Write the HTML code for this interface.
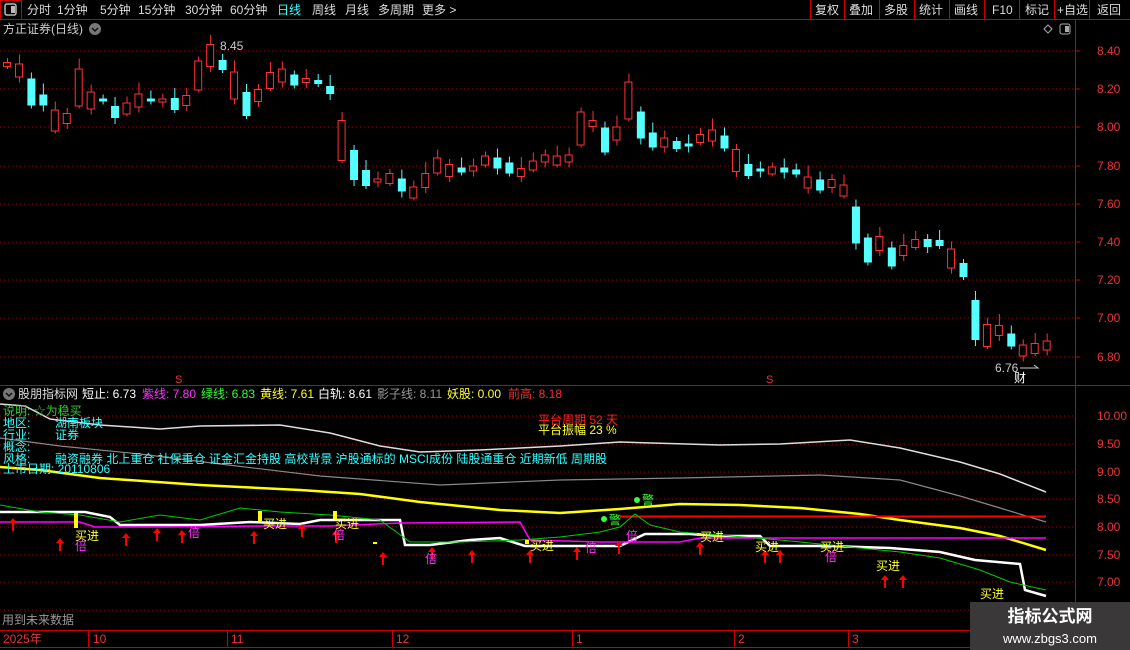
<!DOCTYPE html>
<html><head><meta charset="utf-8"><style>
body{margin:0;background:#000;width:1130px;height:650px;overflow:hidden;font-family:"Liberation Sans","Noto Sans CJK SC",sans-serif;}
svg{position:absolute;left:0;top:0}
text{font-family:"Liberation Sans","Noto Sans CJK SC",sans-serif}
</style></head><body>
<svg id="s" width="1130" height="650" xmlns="http://www.w3.org/2000/svg">
<rect x="0" y="0" width="1130" height="20" fill="#000"/>
<line x1="0" y1="19.5" x2="1130" y2="19.5" stroke="#c00"/>
<rect x="0.5" y="0.5" width="21" height="19" fill="none" stroke="#c00"/>
<rect x="5" y="4" width="11" height="11" rx="2" fill="none" stroke="#bbb" stroke-width="1.5"/><rect x="11" y="6" width="4" height="7" fill="#bbb"/>
<g font-size="12" fill="#ddd">
<text x="27" y="14">分时</text><text x="57" y="14">1分钟</text><text x="100" y="14">5分钟</text><text x="138" y="14">15分钟</text><text x="185" y="14">30分钟</text><text x="230" y="14">60分钟</text>
<text x="277" y="14" fill="#3ff">日线</text><text x="312" y="14">周线</text><text x="345" y="14">月线</text><text x="378" y="14">多周期</text><text x="422" y="14">更多 &gt;</text>
<text x="815" y="14">复权</text><text x="849" y="14">叠加</text><text x="884" y="14">多股</text><text x="919" y="14">统计</text><text x="954" y="14">画线</text><text x="992" y="14">F10</text><text x="1025" y="14">标记</text><text x="1057" y="14">+自选</text><text x="1097" y="14">返回</text>
</g>
<g stroke="#c00"><line x1="810.5" y1="0" x2="810.5" y2="20"/><line x1="844.5" y1="0" x2="844.5" y2="20"/><line x1="879.5" y1="0" x2="879.5" y2="20"/><line x1="914.5" y1="0" x2="914.5" y2="20"/><line x1="949.5" y1="0" x2="949.5" y2="20"/><line x1="984.5" y1="0" x2="984.5" y2="20"/><line x1="1019.5" y1="0" x2="1019.5" y2="20"/><line x1="1054.5" y1="0" x2="1054.5" y2="20"/><line x1="1089.5" y1="0" x2="1089.5" y2="20"/></g>
<line x1="1075.5" y1="20" x2="1075.5" y2="630" stroke="#c00"/>
<line x1="0" y1="385.5" x2="1130" y2="385.5" stroke="#c00"/>
<line x1="0" y1="630.5" x2="1130" y2="630.5" stroke="#c00"/>
<line x1="0" y1="647.5" x2="1130" y2="647.5" stroke="#c00"/>
<text x="3" y="33" font-size="12" fill="#ccc">方正证券(日线)</text>
<circle cx="95" cy="29" r="6" fill="#777"/><path d="M92 28l3 3 3-3" stroke="#111" fill="none" stroke-width="1.5"/>
<path d="M1048 25l4 4-4 4-4-4z" fill="none" stroke="#aaa"/>
<rect x="1060" y="24" width="10" height="10" rx="2" fill="none" stroke="#aaa"/><rect x="1065" y="26" width="4" height="6" fill="#aaa"/>
<g stroke="#a00" stroke-dasharray="1,3">
<line x1="0" y1="51" x2="1075" y2="51"/><line x1="0" y1="89" x2="1075" y2="89"/><line x1="0" y1="127" x2="1075" y2="127"/><line x1="0" y1="166" x2="1075" y2="166"/><line x1="0" y1="204" x2="1075" y2="204"/><line x1="0" y1="242" x2="1075" y2="242"/><line x1="0" y1="280" x2="1075" y2="280"/><line x1="0" y1="318" x2="1075" y2="318"/><line x1="0" y1="357" x2="1075" y2="357"/>
<line x1="0" y1="416" x2="1075" y2="416"/><line x1="0" y1="444" x2="1075" y2="444"/><line x1="0" y1="472" x2="1075" y2="472"/><line x1="0" y1="499" x2="1075" y2="499"/><line x1="0" y1="527" x2="1075" y2="527"/><line x1="0" y1="555" x2="1075" y2="555"/><line x1="0" y1="582" x2="1075" y2="582"/><line x1="0" y1="610" x2="1075" y2="610"/>
</g>
<g font-size="12" fill="#e33">
<text x="1097" y="55">8.40</text><text x="1097" y="93">8.20</text><text x="1097" y="131">8.00</text><text x="1097" y="170">7.80</text><text x="1097" y="208">7.60</text><text x="1097" y="246">7.40</text><text x="1097" y="284">7.20</text><text x="1097" y="322">7.00</text><text x="1097" y="361">6.80</text>
<text x="1097" y="420">10.00</text><text x="1097" y="448">9.50</text><text x="1097" y="476">9.00</text><text x="1097" y="503">8.50</text><text x="1097" y="531">8.00</text><text x="1097" y="559">7.50</text><text x="1097" y="586">7.00</text>
</g>
<g stroke="#c00"><line x1="1075" y1="51" x2="1080" y2="51"/><line x1="1075" y1="89" x2="1080" y2="89"/><line x1="1075" y1="127" x2="1080" y2="127"/><line x1="1075" y1="166" x2="1080" y2="166"/><line x1="1075" y1="204" x2="1080" y2="204"/><line x1="1075" y1="242" x2="1080" y2="242"/><line x1="1075" y1="280" x2="1080" y2="280"/><line x1="1075" y1="318" x2="1080" y2="318"/><line x1="1075" y1="357" x2="1080" y2="357"/></g>
<g id="c"></g>
<text x="220" y="50" font-size="12" fill="#ccc">8.45</text>
<text x="995" y="372" font-size="12" fill="#ccc">6.76</text><path d="M1020 368h18l-4-3" stroke="#ccc" fill="none"/>
<text x="1014" y="382" font-size="12" fill="#fff">财</text>
<text x="175" y="383" font-size="11" fill="#e33">S</text><text x="766" y="383" font-size="11" fill="#e33">S</text>
<circle cx="9" cy="394" r="6" fill="#777"/><path d="M6 393l3 3 3-3" stroke="#111" fill="none" stroke-width="1.5"/>
<text y="398" font-size="12"><tspan x="18" fill="#ddd">股朋指标网</tspan><tspan x="82" fill="#fff">短止: 6.73</tspan><tspan x="142" fill="#f3f">紫线: 7.80</tspan><tspan x="201" fill="#3f3">绿线: 6.83</tspan><tspan x="260" fill="#ff3">黄线: 7.61</tspan><tspan x="318" fill="#fff">白轨: 8.61</tspan><tspan x="377" fill="#999">影子线: 8.11</tspan><tspan x="447" fill="#ff3">妖股: 0.00</tspan><tspan x="508" fill="#e33">前高: 8.18</tspan></text>
<path d="M0 404 L25 406 L50 419 L100 425 L160 429 L200 426 L280 425 L330 433 L380 446 L420 452 L480 450 L560 446 L620 442 L720 445 L780 444 L850 440 L900 448 L960 462 L1000 474 L1046 492" stroke="#ddd" fill="none" stroke-width="1.5"/>
<path d="M0 438 L60 446 L140 454 L220 464 L320 476 L440 485 L560 480 L680 478 L820 475 L900 480 L960 496 L1000 508 L1046 522" stroke="#888" fill="none" stroke-width="1.2"/>
<path d="M0 467 L40 470 L100 478 L200 485 L300 490 L360 494 L420 502 L500 510 L560 513 L620 509 L680 504 L740 505 L800 508 L860 514 L900 520 L960 528 L1000 536 L1046 550" stroke="#ff0" fill="none" stroke-width="2.5"/>
<line x1="620" y1="516.5" x2="1046" y2="516.5" stroke="#f00" stroke-width="2"/>
<path d="M0 512 L85 512 L110 517 L120 525 L200 525 L250 522 L300 524 L320 520 L400 520 L405 545 L430 545 L470 540 L500 538 L525 546 L560 546 L620 546 L645 534 L690 534 L720 536 L760 536 L770 546 L830 546 L890 548 L940 552 L975 560 L1020 564 L1025 590 L1046 596" stroke="#fff" fill="none" stroke-width="2.5"/>
<path d="M0 522 L80 522 L95 527 L170 527 L260 526 L330 526 L400 523 L520 522 L530 540 L600 542 L680 542 L700 538 L760 538 L1046 538" stroke="#f0f" fill="none" stroke-width="1.5"/>
<path d="M0 505 L40 512 L80 515 L120 522 L160 515 L200 520 L240 508 L280 512 L330 515 L380 520 L410 542 L460 542 L520 540 L560 537 L600 532 L620 527 L635 514 L650 525 L680 532 L720 535 L780 540 L820 544 L860 548 L900 552 L940 558 L980 570 L1010 582 L1046 590" stroke="#0c0" fill="none" stroke-width="1"/>
<g fill="#f00" id="ar"></g>
<g font-size="12" fill="#ff3">
<text x="75" y="540">买进</text><text x="263" y="528">买进</text><text x="335" y="528">买进</text><text x="530" y="550">买进</text><text x="700" y="541">买进</text><text x="755" y="551">买进</text><text x="820" y="551">买进</text><text x="876" y="570">买进</text><text x="980" y="598">买进</text>
</g>
<g font-size="12" fill="#f3f"><text x="75" y="550">倍</text><text x="188" y="537">倍</text><text x="333" y="539">倍</text><text x="425" y="563">倍</text><text x="585" y="552">倍</text><text x="626" y="540">倍</text><text x="825" y="561">倍</text></g>
<g fill="#ff0"><rect x="74" y="513" width="4" height="15"/><rect x="258" y="511" width="4" height="10"/><rect x="333" y="511" width="4" height="8"/><rect x="525" y="540" width="4" height="4"/><rect x="697" y="533" width="4" height="3"/><rect x="373" y="542" width="4" height="2"/></g>
<g fill="#3f3" font-size="12"><circle cx="637" cy="500" r="3"/><text x="642" y="504">警</text><circle cx="604" cy="519" r="3"/><text x="609" y="524">警</text></g>
<g font-size="12">
<text x="3" y="415" fill="#3c3">说明: ☆为稳买</text>
<text x="3" y="427" fill="#3ff">地区:</text><text x="55" y="427" fill="#3ff">湖南板块</text>
<text x="3" y="439" fill="#3ff">行业:</text><text x="55" y="439" fill="#3ff">证券</text>
<text x="3" y="451" fill="#3ff">概念:</text>
<text x="3" y="463" fill="#3ff">风格:</text><text x="55" y="463" fill="#3ff">融资融券 北上重仓 社保重仓 证金汇金持股 高校背景 沪股通标的 MSCI成份 陆股通重仓 近期新低 周期股</text>
<text x="3" y="473" fill="#3ff">上市日期: 20110806</text>
<text x="538" y="424" fill="#f22">平台周期 52 天</text>
<text x="538" y="434" fill="#ff3">平台振幅 23 %</text>
<text x="2" y="624" fill="#999">用到未来数据</text>
</g>
<g font-size="12" fill="#e33"><text x="3" y="643">2025年</text><text x="93" y="643">10</text><text x="231" y="643">11</text><text x="396" y="643">12</text><text x="576" y="643">1</text><text x="738" y="643">2</text><text x="852" y="643">3</text></g>
<g stroke="#c00"><line x1="88.5" y1="630" x2="88.5" y2="647"/><line x1="227.5" y1="630" x2="227.5" y2="647"/><line x1="392.5" y1="630" x2="392.5" y2="647"/><line x1="572.5" y1="630" x2="572.5" y2="647"/><line x1="734.5" y1="630" x2="734.5" y2="647"/><line x1="848.5" y1="630" x2="848.5" y2="647"/></g>
<rect x="970" y="602" width="160" height="48" fill="#3a3838"/>
<text x="1050" y="622" font-size="17" font-weight="bold" fill="#fff" text-anchor="middle">指标公式网</text>
<text x="1050" y="643" font-size="13" fill="#fff" text-anchor="middle">www.zbgs3.com</text>
</svg>
<script>
var ys=[64,70,92,100,120,118,87,100,100,112,108,100,100,100,104,100,75,55,65,85,104,95,80,75,80,80,82,90,140,165,178,180,178,185,192,180,165,170,170,168,160,163,168,172,165,158,160,158,128,123,140,133,100,125,140,142,145,145,138,135,142,160,170,170,170,170,172,182,185,183,190,225,250,243,257,250,243,243,243,258,270,320,335,330,340,350,348,345];
var g=document.getElementById('c'),h='';
for(var i=0;i<ys.length;i++){var x=7+i*11.95,y=ys[i],p=i?ys[i-1]:y+4;var up=(i%3==1)||y<p;var b=Math.max(3,Math.min(40,Math.abs(y-p)+(i*7%9)));var t=y-b/2;var c=up?'#f33':'#5ff';
h+='<line x1="'+(x+0.5)+'" y1="'+(t-4-(i*5%8))+'" x2="'+(x+0.5)+'" y2="'+(t+b+3+(i*3%6))+'" stroke="'+c+'"/>';
h+=up?'<rect x="'+(x-3.5)+'" y="'+(t+0.5)+'" width="7" height="'+b+'" fill="#000" stroke="'+c+'"/>':'<rect x="'+(x-3.5)+'" y="'+t+'" width="8" height="'+b+'" fill="'+c+'"/>';}
g.innerHTML=h;
var ax=[13,60,126,157,182,254,302,336,383,432,472,530,577,619,700,765,780,885,903],ay=[518,538,533,528,530,531,524,530,552,547,550,550,547,541,542,550,550,575,575],a='';
for(var j=0;j<ax.length;j++){var X=ax[j],Y=ay[j];a+='<path d="M'+X+' '+Y+'l-4 5h3v8h2v-8h3z"/>';}
document.getElementById('ar').innerHTML=a;
</script>
</body></html>
